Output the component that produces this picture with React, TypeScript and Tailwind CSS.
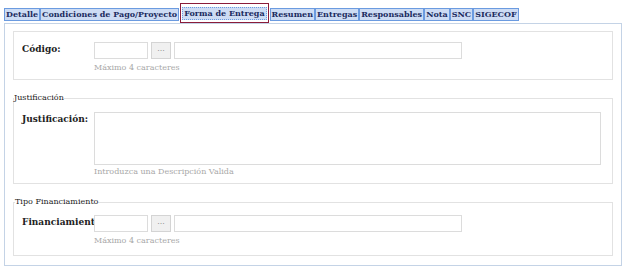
const tabs = [
  "Detalle",
  "Condiciones de Pago/Proyecto",
  "Forma de Entrega",
  "Resumen",
  "Entregas",
  "Responsables",
  "Nota",
  "SNC",
  "SIGECOF",
];

const serif = "font-[family-name:DejaVu_Serif,serif]";

const CodeField = ({ label }: { label: string }) => (
  <div className="flex">
    <div className={`w-[72px] shrink-0 overflow-hidden whitespace-nowrap pt-[1px] text-[9px] font-bold text-[#222] ${serif}`}>
      {label}
    </div>
    <div className="flex flex-col">
      <div className="flex gap-[3px]">
        <div className="h-[17px] w-[54px] border border-[#dcdcdc] bg-white" />
        <div className="flex h-[17px] w-[20px] items-center justify-center border border-[#d4d4d4] bg-[#f0f0f0] pb-[3px] text-[8px] text-[#777]">
          ...
        </div>
        <div className="h-[17px] w-[288px] border border-[#dcdcdc] bg-white" />
      </div>
      <div className={`mt-[4px] text-[8px] leading-[10px] text-[#a8a8a8] ${serif}`}>
        Máximo 4 caracteres
      </div>
    </div>
  </div>
);

export default function App() {
  return (
    <div className={`relative h-[267px] w-[626px] overflow-hidden bg-white ${serif}`}>
      <div className="flex items-center pl-[4px] pt-[3px]">
        {tabs.map((tab) => {
          const active = tab === "Forma de Entrega";
          return (
            <div
              key={tab}
              className={
                active
                  ? "mx-[1px] h-[20px] border border-[#8b1c3a] px-[1px] pt-[3px]"
                  : "pt-[2px]"
              }
            >
              <div
                className={`h-[13px] whitespace-nowrap border border-[#6b9be0] bg-[#cddcf4] px-[1px] text-[8px] leading-[11px] font-bold text-[#1b2b5e] ${serif} ${
                  active ? "border-dotted border-[#3f5f9f]" : ""
                }`}
              >
                {tab}
              </div>
            </div>
          );
        })}
      </div>
      <div className="mx-[4px] h-[243px] border border-[#c4d3e6] px-[8px] pt-[7px]">
        <fieldset className="h-[49px] border border-[#e2e2e2] px-[8px] pt-[10px]">
          <CodeField label="Código:" />
        </fieldset>

        <fieldset className="mt-[12px] h-[92px] border border-[#e2e2e2] px-[8px] pt-[8px]">
          <legend className={`ml-[-8px] text-[8px] text-[#222] ${serif}`}>Justificación</legend>
          <div className="flex">
            <div className={`w-[72px] shrink-0 pt-[1px] text-[9px] font-bold text-[#222] ${serif}`}>
              Justificación:
            </div>
            <div className="flex flex-1 flex-col pr-[3px]">
              <div className="h-[53px] border border-[#dcdcdc] bg-white" />
              <div className={`mt-[2px] text-[8px] leading-[10px] text-[#a8a8a8] ${serif}`}>
                Introduzca una Descripción Valida
              </div>
            </div>
          </div>
        </fieldset>

        <fieldset className="mt-[12px] h-[60px] border border-[#e2e2e2] px-[8px] pt-[7px]">
          <legend className={`ml-[-7px] text-[8px] text-[#222] ${serif}`}>Tipo Financiamiento</legend>
          <CodeField label="Financiamiento" />
        </fieldset>
      </div>
    </div>
  );
}
